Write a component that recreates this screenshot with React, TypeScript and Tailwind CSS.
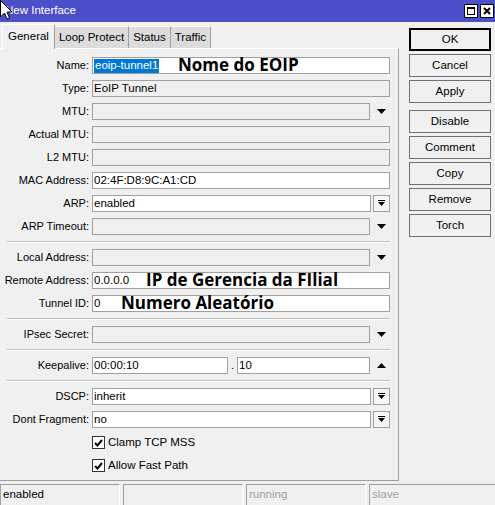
import React from "react";

const font = { fontFamily: '"Liberation Sans", Arial, sans-serif' };

function DownArrow() {
  return (
    <div className="w-[18px] h-[17px] ml-[2px] flex items-center justify-center">
      <svg width="9" height="5" viewBox="0 0 9 5"><polygon points="0,0 9,0 4.5,5" fill="#000" /></svg>
    </div>
  );
}
function UpArrow() {
  return (
    <div className="w-[18px] h-[17px] ml-[2px] flex items-center justify-center">
      <svg width="9" height="5" viewBox="0 0 9 5"><polygon points="0,5 9,5 4.5,0" fill="#000" /></svg>
    </div>
  );
}
function BoxArrow() {
  return (
    <div className="w-[17px] h-[17px] ml-[2px] flex items-center justify-center border border-[#a0a0a0] bg-[#f4f4f4]">
      <svg width="9" height="7" viewBox="0 0 9 7">
        <rect x="1" y="0" width="7" height="1" fill="#000" />
        <polygon points="1,2 8,2 4.5,6" fill="#000" />
      </svg>
    </div>
  );
}

function Field({ value, white, children }: { value?: React.ReactNode; white?: boolean; children?: React.ReactNode }) {
  return (
    <div className={`flex-1 h-[17px] border border-[#a0a0a0] ${white ? "bg-white" : "bg-[#f0f0f0]"} flex items-center pl-[1px] text-[11.5px] leading-none text-black whitespace-nowrap`}>
      {value}
      {children}
    </div>
  );
}

function Row({ label, children }: { label: string; children: React.ReactNode }) {
  return (
    <div className="relative h-[23px] flex items-center">
      <div className="w-[89px] text-right text-[11px] text-black whitespace-nowrap">{label}</div>
      <div className="ml-[3px] w-[298px] flex items-center">{children}</div>
    </div>
  );
}

function Sep() {
  return (
    <div className="h-[8px] flex flex-col justify-center pl-[7px] w-[390px]">
      <div className="h-px bg-[#c0c0c0]" />
      <div className="h-px bg-white" />
    </div>
  );
}

function Overlay({ text, left }: { text: string; left: number }) {
  return (
    <div
      className="absolute top-[1px] text-[17px] font-bold text-black leading-[20px] whitespace-nowrap"
      style={{ left, fontFamily: '"Open Sans", "Noto Sans", sans-serif' }}
    >
      {text}
    </div>
  );
}

function Btn({ label, def }: { label: string; def?: boolean }) {
  return (
    <div className={`h-[23px] w-[82px] flex items-center justify-center text-[11.5px] text-black bg-[#f0f0f0] ${def ? "border-2 border-black" : "border border-[#707070]"}`}>
      {label}
    </div>
  );
}

function Check({ label }: { label: string }) {
  return (
    <div className="h-[23px] flex items-center pl-[92px]">
      <div className="w-[13px] h-[13px] border border-[#333] bg-white flex items-center justify-center">
        <svg width="9" height="8" viewBox="0 0 9 8"><polyline points="1,4 3.5,6.5 8,1" fill="none" stroke="#000" strokeWidth="2" /></svg>
      </div>
      <span className="ml-[3px] text-[11.5px] text-black">{label}</span>
    </div>
  );
}

export default function App() {
  return (
    <div className="w-[495px] h-[505px] bg-[#f0f0f0] flex flex-col relative overflow-hidden" style={font}>
      {/* title bar */}
      <div className="h-[22px] bg-[#4b4fc8] flex items-center justify-between shrink-0">
        <span className="ml-[5px] text-white text-[11.5px]">New Interface</span>
        <div className="flex items-center gap-[2px] mr-[1px]">
          <div className="w-[14px] h-[14px] bg-white border border-black flex items-center justify-center">
            <div className="w-[8px] h-[8px] border border-black border-t-2" />
          </div>
          <div className="w-[14px] h-[14px] bg-white border border-black flex items-center justify-center">
            <svg width="8" height="8" viewBox="0 0 8 8"><path d="M1 1L7 7M7 1L1 7" stroke="#000" strokeWidth="2" /></svg>
          </div>
        </div>
      </div>
      {/* cursor */}
      <svg className="absolute left-0 top-0" width="13" height="20" viewBox="0 0 13 20">
        <path d="M0.5 0.5 L0.5 17 L4.5 13 L7 19 L9.5 18 L7 12 L12 12 Z" fill="#fff" stroke="#000" strokeWidth="1" />
      </svg>

      <div className="flex flex-1">
        {/* left panel */}
        <div className="w-[399px] flex flex-col">
          <div className="h-[26px] flex items-end pl-[2px] text-[11.5px] text-black">
            <div className="h-[25px] px-[5px] flex items-center bg-[#f0f0f0] border-t border-l border-white border-r border-r-[#a0a0a0] relative -mb-px z-10">General</div>
            <div className="h-[22px] px-[4px] flex items-center bg-[#dcdcdc] border-t border-r border-[#a0a0a0] border-t-white">Loop Protect</div>
            <div className="h-[22px] px-[4px] flex items-center bg-[#dcdcdc] border-t border-r border-[#a0a0a0] border-t-white">Status</div>
            <div className="h-[22px] px-[4px] flex items-center bg-[#dcdcdc] border-t border-r border-[#a0a0a0] border-t-white">Traffic</div>
          </div>
          <div className="h-[433px] border-t border-t-white border-r border-r-[#a0a0a0] border-b border-b-[#a0a0a0] pt-[5px]">
            <Row label="Name:">
              <Field white value={<span className="bg-[#0078d7] text-white px-[1px] h-[14px] flex items-center">eoip-tunnel1</span>} />
              <Overlay text="Nome do EOIP" left={178} />
            </Row>
            <Row label="Type:"><Field value="EoIP Tunnel" /></Row>
            <Row label="MTU:"><Field /><DownArrow /></Row>
            <Row label="Actual MTU:"><Field /></Row>
            <Row label="L2 MTU:"><Field /></Row>
            <Row label="MAC Address:"><Field white value="02:4F:D8:9C:A1:CD" /></Row>
            <Row label="ARP:"><Field white value="enabled" /><BoxArrow /></Row>
            <Row label="ARP Timeout:"><Field /><DownArrow /></Row>
            <Sep />
            <Row label="Local Address:"><Field /><DownArrow /></Row>
            <Row label="Remote Address:">
              <Field white value="0.0.0.0" />
              <Overlay text="IP de Gerencia da FIlial" left={146} />
            </Row>
            <Row label="Tunnel ID:">
              <Field white value="0" />
              <Overlay text="Numero Aleatório" left={121} />
            </Row>
            <Sep />
            <Row label="IPsec Secret:"><Field /><DownArrow /></Row>
            <Sep />
            <Row label="Keepalive:">
              <div className="w-[136px] h-[17px] border border-[#a0a0a0] bg-white flex items-center pl-[1px] text-[11.5px] leading-none">00:00:10</div>
              <span className="w-[9px] text-center text-[11px] leading-none">.</span>
              <Field white value="10" />
              <UpArrow />
            </Row>
            <Sep />
            <Row label="DSCP:"><Field white value="inherit" /><BoxArrow /></Row>
            <Row label="Dont Fragment:"><Field white value="no" /><BoxArrow /></Row>
            <Check label="Clamp TCP MSS" />
            <Check label="Allow Fast Path" />
          </div>
        </div>
        {/* right buttons */}
        <div className="ml-[10px] pt-[6px] flex flex-col">
          <div className="flex flex-col gap-[3px]">
            <Btn label="OK" def />
            <Btn label="Cancel" />
            <Btn label="Apply" />
          </div>
          <div className="flex flex-col gap-[3px] mt-[7px]">
            <Btn label="Disable" />
            <Btn label="Comment" />
            <Btn label="Copy" />
            <Btn label="Remove" />
            <Btn label="Torch" />
          </div>
        </div>
      </div>

      {/* status bar */}
      <div className="h-[21px] flex gap-[3px] text-[11.5px] shrink-0 mt-[2px]">
        <div className="w-[120px] border-t border-l border-[#a0a0a0] border-r border-r-white flex items-center pl-[2px] text-black">enabled</div>
        <div className="w-[120px] border-t border-l border-[#a0a0a0] border-r border-r-white" />
        <div className="w-[120px] border-t border-l border-[#a0a0a0] border-r border-r-white flex items-center pl-[2px] text-[#a0a0a0]">running</div>
        <div className="flex-1 border-t border-l border-[#a0a0a0] flex items-center pl-[2px] text-[#a0a0a0]">slave</div>
      </div>
    </div>
  );
}
